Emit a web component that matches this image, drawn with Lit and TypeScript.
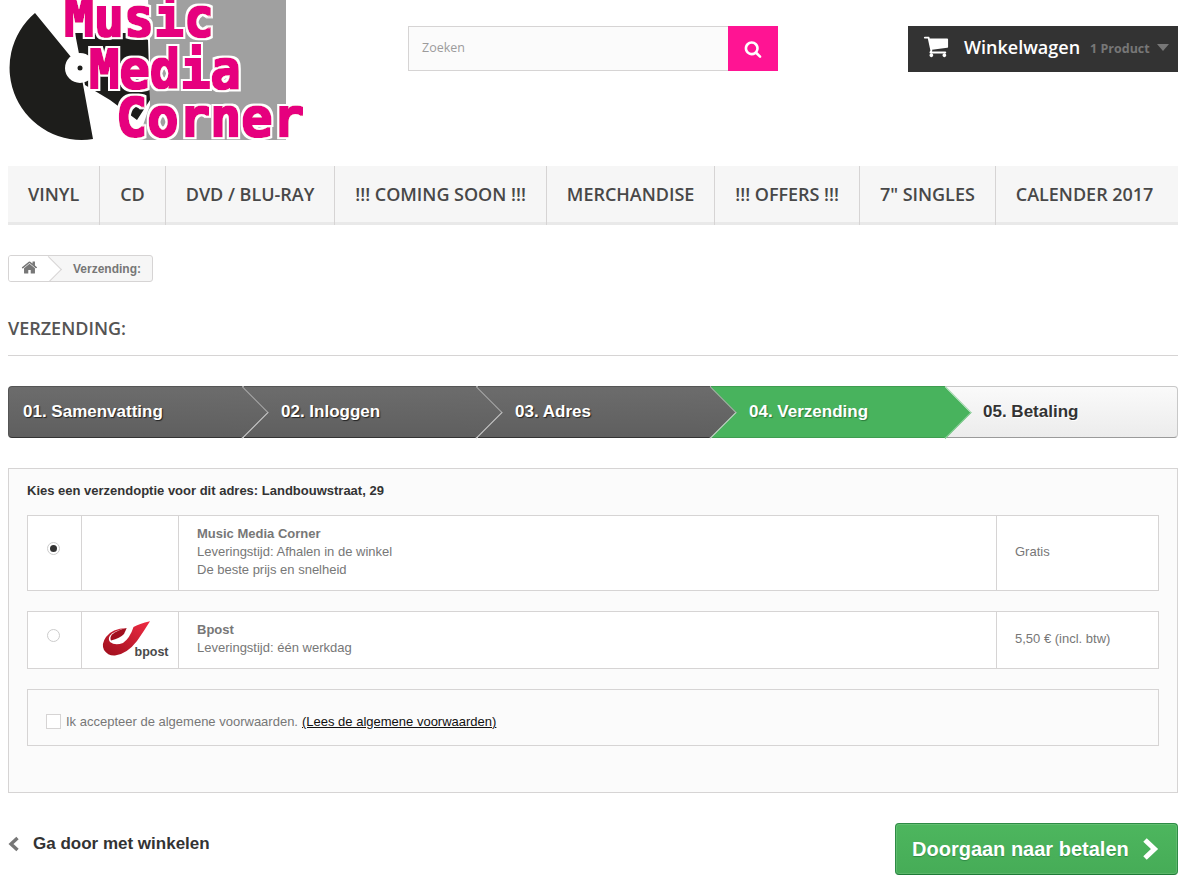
import { LitElement, html, css, svg } from "lit";
import { customElement } from "lit/decorators.js";

const P = {
  search: "M1216 832q0-185-131.5-316.5t-316.5-131.5-316.5 131.5-131.5 316.5 131.5 316.5 316.5 131.5 316.5-131.5 131.5-316.5zm512 832q0 52-38 90t-90 38q-54 0-90-38l-343-342q-179 124-399 124-143 0-273.5-55.5t-225-150-150-225-55.5-273.5 55.5-273.5 150-225 225-150 273.5-55.5 273.5 55.5 225 150 150 225 55.5 273.5q0 220-124 399l343 343q37 37 37 90z",
  cart: "M704 1536q0 52-38 90t-90 38-90-38-38-90 38-90 90-38 90 38 38 90zm896 0q0 52-38 90t-90 38-90-38-38-90 38-90 90-38 90 38 38 90zm128-1088v512q0 24-16.5 42.5t-40.5 21.5l-1044 122q13 60 13 70 0 16-24 64h920q26 0 45 19t19 45-19 45-45 19h-1024q-26 0-45-19t-19-45q0-11 8-31.5t16-36 21.5-40 15.5-29.5l-177-823h-204q-26 0-45-19t-19-45 19-45 45-19h256q16 0 28.5 6.5t19.5 15.5 13 24.5 8 26 5.5 29.5 4.5 26h1201q26 0 45 19t19 45z",
  home: "M1472 992v480q0 26-19 45t-45 19h-384v-384h-256v384h-384q-26 0-45-19t-19-45v-480q0-1 .5-3t.5-3l575-474 575 474q1 2 1 6zm223-69l-62 74q-8 9-21 11h-3q-13 0-21-7l-692-577-692 577q-12 8-24 7-13-2-21-11l-62-74q-8-10-7-23.5t11-21.5l719-599q32-26 76-26t76 26l244 204v-195q0-14 9-23t23-9h192q14 0 23 9t9 23v408l219 182q10 8 11 21.5t-7 23.5z",
};
const icon = (d: string, cls: string) =>
  html`<svg class=${cls} viewBox="0 0 1792 1792" aria-hidden="true"><path d=${d} fill="currentColor"></path></svg>`;

const logo = html`<svg class="logo" viewBox="0 0 297 140" aria-label="Music Media Corner">
  ${svg`
  <defs>
    <filter id="lf" x="-5%" y="-20%" width="110%" height="140%">
      <feMorphology in="SourceGraphic" operator="dilate" radius="1.1" result="p"></feMorphology>
      <feMorphology in="SourceAlpha" operator="dilate" radius="3.4" result="o"></feMorphology>
      <feFlood flood-color="#fff"></feFlood>
      <feComposite in2="o" operator="in" result="w"></feComposite>
      <feMerge><feMergeNode in="w"></feMergeNode><feMergeNode in="p"></feMergeNode></feMerge>
    </filter>
  </defs>
  <rect x="125" y="0" width="153" height="140" fill="#a0a0a0"></rect>
  <path d="M0 0H140L142 40L142 105L130 140H0Z" fill="#fff"></path>
  <path d="M27 13A72 72 0 0 0 85 139L72 68Z" fill="#1d1d1b"></path>
  <path d="M67 33H130L140 40L142 100L129 120L102 100L77 85Z" fill="#1d1d1b"></path>
  <circle cx="72" cy="68" r="15" fill="#fff"></circle>
  <circle cx="72" cy="68" r="2.5" fill="#1d1d1b"></circle>
  <text class="lt" x="56" y="36" textLength="150" lengthAdjust="spacingAndGlyphs">Music</text>
  <text class="lt" x="81" y="88" textLength="152" lengthAdjust="spacingAndGlyphs">Media</text>
  <text class="lt" x="108" y="136" textLength="188" lengthAdjust="spacingAndGlyphs">Corner</text>
  `}
</svg>`;

const bpost = html`<svg class="bpost" viewBox="0 0 70 42" aria-label="bpost">
  ${svg`
  <defs><linearGradient id="bp" x1="0" y1="1" x2="1" y2="0">
    <stop offset="0" stop-color="#9d0e1c"></stop><stop offset="1" stop-color="#f02c44"></stop>
  </linearGradient></defs>
  <path d="M50 4.3Q39 7 33.5 10Q30 21 23 26Q15 29 10 25Q7 21 11.7 16.7Q17 13 26.7 11Q12 11.5 6 20Q1 27 4 33Q8 39 15 38.5Q27 37 37 24Q44 14 50 4.3Z" fill="url(#bp)"></path>
  <path d="M26.7 11Q18 12.5 12 17.5Q9.5 20.5 11 23.5Q20 21 24 17Z" fill="#a10f1e"></path>
  <text class="bt" x="34.5" y="39">bpost</text>
  `}
</svg>`;

const menu = ["Vinyl", "CD", "DVD / Blu-ray", "!!! Coming soon !!!", "Merchandise", "!!! Offers !!!", '7" singles', "Calender 2017"];
const steps = [
  ["01. Samenvatting", "done"],
  ["02. Inloggen", "done"],
  ["03. Adres", "done"],
  ["04. Verzending", "active"],
  ["05. Betaling", "todo"],
];

@customElement("app-root")
export class AppRoot extends LitElement {
  static styles = css`
    :host { display: block; width: 1185px; height: 886px; overflow: hidden; background: #fff; font-family: "Liberation Sans", Arial, sans-serif; font-size: 13px; color: #777; }
    .page { width: 1170px; margin-left: 8px; display: flex; flex-direction: column; }
    svg { display: block; }

    .top { height: 166px; display: flex; align-items: flex-start; }
    .logo { width: 297px; height: 140px; flex: none; }
    .lt { font-family: "DejaVu Sans Mono", monospace; font-weight: 700; font-size: 54px; fill: #e6007e; filter: url(#lf); }
    .search { margin: 26px 0 0 103px; width: 370px; height: 45px; display: flex; }
    .search-in { flex: 1; box-sizing: border-box; border: 1px solid #d6d4d4; border-right: 0; background: #fbfbfb; color: #9c9b9b; padding-left: 13px; line-height: 41px; font-family: "Open Sans", sans-serif; font-size: 12.5px; }
    .search-btn { width: 50px; background: #ff1493; color: #fff; display: flex; align-items: center; justify-content: center; }
    .i-search { width: 18px; height: 18px; }
    .cart { margin: 26px 0 0 130px; width: 270px; height: 46px; background: #333; color: #fff; display: flex; align-items: center; font-family: "Open Sans", sans-serif; font-weight: 600; box-sizing: border-box; padding-left: 15px; }
    .i-cart { width: 26px; height: 26px; margin-right: 15px; margin-bottom: 6px; }
    .cart-t { font-size: 18px; margin-right: 10px; margin-bottom: 4px; }
    .cart-n { font-size: 12.5px; color: #777; font-weight: 700; margin-bottom: 2px; }
    .caret { width: 0; height: 0; border: 6px solid transparent; border-top: 7px solid #777; border-bottom: 0; margin-left: 7px; margin-bottom: 3px; }

    .menu { height: 59px; box-sizing: border-box; background: #f6f6f6; border-bottom: 3px solid #e9e9e9; display: flex; }
    .menu a { padding: 0 20px; border-right: 1px solid #d6d4d4; margin-bottom: -3px; font-family: "Open Sans", sans-serif; font-weight: 600; font-size: 18px; letter-spacing: -0.02px; line-height: 57px; color: #484848; text-transform: uppercase; white-space: nowrap; }
    .menu a:last-child { border-right: 0; }

    .crumb { margin-top: 30px; align-self: flex-start; height: 27px; box-sizing: border-box; border: 1px solid #d6d4d4; border-radius: 3px; background: #f6f6f6; display: flex; align-items: center; padding-right: 11px; font-size: 12px; font-weight: 700; color: #777; overflow: hidden; }
    .home { position: relative; width: 40px; height: 25px; background: #fff; color: #777; display: flex; align-items: center; padding-left: 12px; box-sizing: border-box; margin-right: 24px; }
    .home::after { content: ""; position: absolute; right: -9px; top: 3.5px; width: 18px; height: 18px; background: #fff; border-top: 1px solid #d6d4d4; border-right: 1px solid #d6d4d4; transform: rotate(45deg); }
    .i-home { width: 17px; height: 17px; margin-top: -3px; }

    h1 { margin: 36px 0 0; height: 37px; border-bottom: 1px solid #d6d4d4; font-family: "Open Sans", sans-serif; font-weight: 600; font-size: 18px; line-height: 20px; color: #555454; text-transform: uppercase; }

    .steps { margin-top: 30px; height: 52px; display: flex; }
    .step { position: relative; width: 234px; box-sizing: border-box; padding-left: 38px; font-weight: 700; font-size: 17px; line-height: 50px; }
    .step.done { padding-left: 37px; }
    .step:first-child { width: 235px; padding-left: 14px; border-radius: 4px 0 0 4px; }
    .step:last-child { border-radius: 0 4px 4px 0; }
    .step:nth-child(1) { z-index: 5; } .step:nth-child(2) { z-index: 4; } .step:nth-child(3) { z-index: 3; } .step:nth-child(4) { z-index: 2; }
    .step span { position: relative; z-index: 1; }
    .done { background: linear-gradient(#6c6c6c, #5f5f5f); }
    .done { color: #fff; border: 1px solid; border-color: #555 transparent #333; text-shadow: 1px 1px 1px #222; }
    .done:first-child { border-left-color: #555; }
    .active { background: #48b35d; }
    .active { color: #fff; border-top: 1px solid #3f9c50; border-bottom: 1px solid #3f9c50; text-shadow: 1px 1px 1px #2b7b3b; }
    .todo { flex: 1; color: #333; background: linear-gradient(#fafafa, #ececec); border: 1px solid #c8c8c8; border-left: 0; border-bottom-color: #9a9a9a; text-shadow: 1px 1px 0 #fff; }
    .step:not(:last-child)::after { content: ""; position: absolute; top: 7px; right: -19px; width: 37px; height: 37px; box-sizing: border-box; transform: rotate(45deg); border-top: 1px solid #a8a8a8; border-right: 1px solid #d0d0d0; background: linear-gradient(135deg, #6c6c6c, #5f5f5f); }
    .step.active::after { top: 6.5px; border-top-color: #cfe8d4; border-right-color: #8fd09c; background: #48b35d; }

    .panel { margin-top: 30px; height: 325px; box-sizing: border-box; border: 1px solid #d6d4d4; background: #fbfbfb; padding: 14px 18px 0; display: flex; flex-direction: column; }
    .panel-t { font-weight: 700; color: #333; font-size: 13px; line-height: 16px; margin-bottom: 16px; }
    .row { display: grid; grid-template-columns: 53px 97px 818px 1fr; box-sizing: border-box; background: #fff; border: 1px solid #d6d4d4; margin-bottom: 20px; line-height: 18px; }
    .row > div { border-left: 1px solid #d6d4d4; display: flex; flex-direction: column; justify-content: center; }
    .row > div:first-child { border-left: 0; align-items: center; padding-right: 2px; }
    .desc, .price { padding-left: 18px; padding-bottom: 2px; }
    .desc b { color: #777; }
    .r1 { height: 76px; } .r2 { height: 58px; }
    .row > .logo-cell { padding: 0 0 4px 18px; }
    .bpost { width: 70px; height: 42px; }
    .bt { font-weight: 700; font-size: 12.5px; fill: #4a4a4a; }
    .radio { width: 13px; height: 13px; box-sizing: border-box; border: 1px solid #ccc; border-radius: 50%; background: #fff; margin-top: -10px; display: flex; align-items: center; justify-content: center; }
    .dot { width: 7px; height: 7px; border-radius: 50%; background: #333; }
    .tos { height: 57px; box-sizing: border-box; border: 1px solid #d6d4d4; background: #fbfbfb; display: flex; align-items: center; padding: 8px 0 0 18px; }
    .check { width: 15px; height: 15px; box-sizing: border-box; border: 1px solid #d6d4d4; background: #fff; margin-right: 5px; }
    .tos a { color: #111; text-decoration: underline; margin-left: 4px; }

    .foot { margin-top: 30px; display: flex; justify-content: space-between; align-items: flex-start; }
    .back { display: flex; align-items: center; font-weight: 700; font-size: 17px; color: #333; margin-top: 11px; line-height: 20px; }
    .chev-l { width: 12px; height: 16px; margin-right: 13px; color: #777; }
    .next { width: 283px; height: 52px; box-sizing: border-box; border: 1px solid #2e8b45; border-bottom-color: #1f7a36; border-radius: 4px; background: linear-gradient(#4db65e, #46ac57); box-shadow: inset 0 0 0 1px rgba(255, 255, 255, 0.12); display: flex; align-items: center; padding-left: 16px; color: #fff; font-weight: 700; font-size: 20px; text-shadow: 0 1px 1px #2f8a45; }
    .chev-r { width: 17px; height: 24px; margin-left: 13px; }
    .chev { fill: none; stroke: currentColor; stroke-linecap: butt; stroke-linejoin: miter; }
  `;

  render() {
    return html`<div class="page">
      <header class="top">
        ${logo}
        <div class="search">
          <div class="search-in">Zoeken</div>
          <div class="search-btn">${icon(P.search, "i-search")}</div>
        </div>
        <div class="cart">
          ${icon(P.cart, "i-cart")}
          <span class="cart-t">Winkelwagen</span>
          <span class="cart-n">1 Product</span>
          <span class="caret"></span>
        </div>
      </header>
      <nav class="menu">${menu.map((m) => html`<a>${m}</a>`)}</nav>
      <div class="crumb">
        <div class="home">${icon(P.home, "i-home")}</div>
        <span>Verzending:</span>
      </div>
      <h1>Verzending:</h1>
      <div class="steps">
        ${steps.map(([t, c]) => html`<div class="step ${c}"><span>${t}</span></div>`)}
      </div>
      <section class="panel">
        <div class="panel-t">Kies een verzendoptie voor dit adres: Landbouwstraat, 29</div>
        <div class="row r1">
          <div><div class="radio"><div class="dot"></div></div></div>
          <div></div>
          <div class="desc"><b>Music Media Corner</b><span>Leveringstijd: Afhalen in de winkel</span><span>De beste prijs en snelheid</span></div>
          <div class="price">Gratis</div>
        </div>
        <div class="row r2">
          <div><div class="radio"></div></div>
          <div class="logo-cell">${bpost}</div>
          <div class="desc"><b>Bpost</b><span>Leveringstijd: één werkdag</span></div>
          <div class="price">5,50 € (incl. btw)</div>
        </div>
        <div class="tos">
          <div class="check"></div>
          <span>Ik accepteer de algemene voorwaarden.</span>
          <a>(Lees de algemene voorwaarden)</a>
        </div>
      </section>
      <div class="foot">
        <div class="back">
          <svg class="chev-l" viewBox="0 0 12 16" aria-hidden="true"><path class="chev" stroke-width="3.4" d="M9.5 2L3 8l6.5 6"></path></svg>
          Ga door met winkelen
        </div>
        <div class="next">
          Doorgaan naar betalen
          <svg class="chev-r" viewBox="0 0 17 24" aria-hidden="true"><path class="chev" stroke-width="5" d="M3 3l9.5 9L3 21"></path></svg>
        </div>
      </div>
    </div>`;
  }
}
